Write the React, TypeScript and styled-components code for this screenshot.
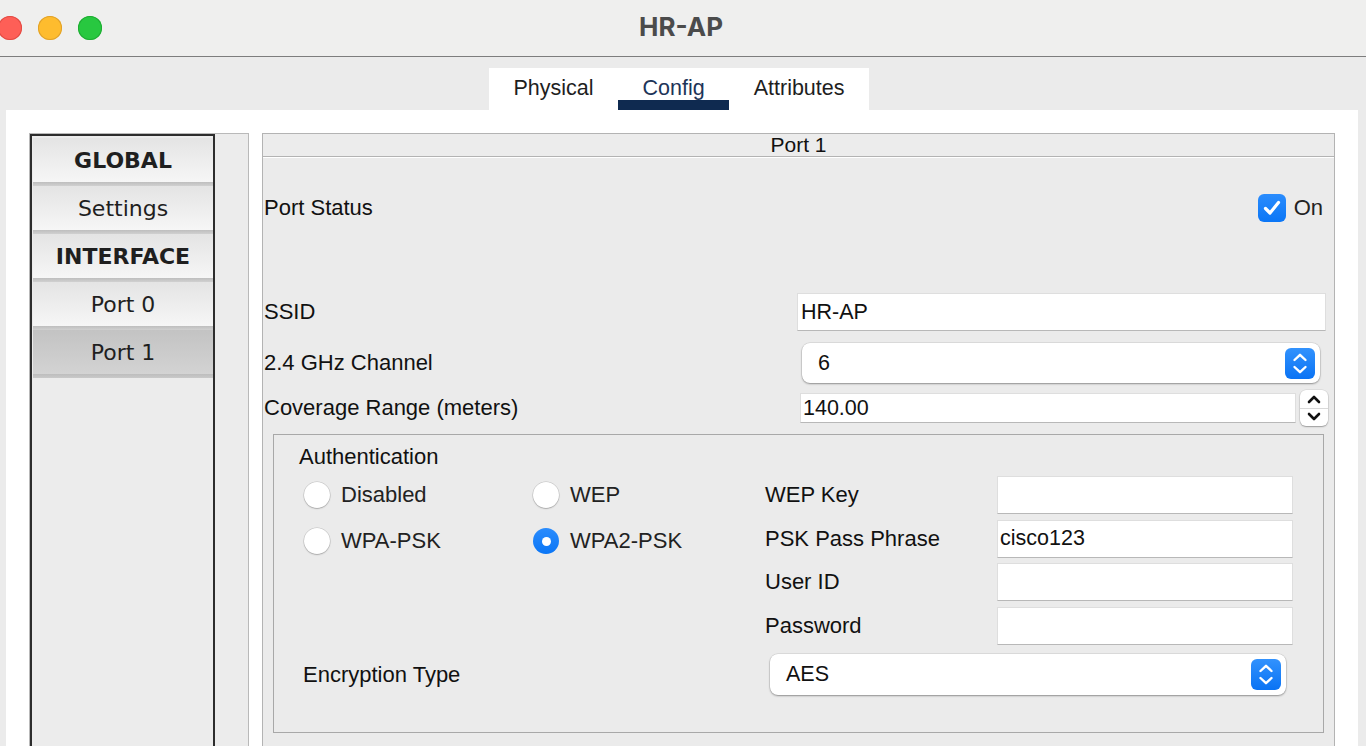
import React from "react";
import styled, { createGlobalStyle } from "styled-components";

const GlobalStyle = createGlobalStyle`
  html, body {
    margin: 0;
    padding: 0;
    background: #ebebeb;
  }
  * {
    box-sizing: border-box;
  }
`;

const Root = styled.div`
  width: 1366px;
  height: 746px;
  overflow: hidden;
  display: flex;
  flex-direction: column;
  background: #ebebeb;
  font-family: "Liberation Sans", Arial, sans-serif;
  color: #111;
`;

const TitleBar = styled.div`
  height: 57px;
  flex-shrink: 0;
  display: grid;
  grid-template-columns: 1fr auto 1fr;
  align-items: center;
  background: #efefee;
  border-bottom: 1px solid #7d7d7d;
`;

const Lights = styled.div`
  display: flex;
  gap: 16px;
  margin-left: -2px;
  margin-top: -1px;
`;

const Light = styled.span<{ $color: string; $edge: string }>`
  width: 24px;
  height: 24px;
  border-radius: 50%;
  background: ${(p) => p.$color};
  box-shadow: inset 0 0 0 1px ${(p) => p.$edge};
`;

const Title = styled.div`
  font-family: Inter, "Liberation Sans", sans-serif;
  font-weight: 700;
  font-size: 26px;
  color: #4b4b4b;
  margin-top: -3px;
  margin-left: -4px;
`;

const Body = styled.div`
  flex: 1;
  min-height: 0;
  display: flex;
  flex-direction: column;
`;

const TabBar = styled.div`
  align-self: center;
  margin: 11px 8px 0 0;
  display: flex;
  background: #fff;
`;

const Tab = styled.div<{ $active?: boolean }>`
  position: relative;
  height: 42px;
  padding: 8px 24.5px 0;
  line-height: 24px;
  font-size: 21.5px;
  color: ${(p) => (p.$active ? "#1d3458" : "#1e1e1e")};
  &::after {
    content: "";
    display: ${(p) => (p.$active ? "block" : "none")};
    position: absolute;
    left: 0;
    right: 0;
    bottom: 0;
    height: 10px;
    background: #0f2a50;
  }
`;

const Content = styled.div`
  flex: 1;
  min-height: 0;
  margin: 0 8px 0 6px;
  padding: 23px 23px 0;
  background: #fff;
  display: flex;
  gap: 13px;
  overflow: hidden;
`;

const Sidebar = styled.div`
  width: 220px;
  flex-shrink: 0;
  background: #ececec;
  border: 1px solid #b9b9b9;
  border-bottom: none;
`;

const NavList = styled.div`
  width: 185px;
  height: 100%;
  border: 2px solid #2d2d2d;
  border-bottom: none;
  padding: 2px 0 0 1px;
  background: #ececec;
`;

const NavItem = styled.div<{ $bold?: boolean; $selected?: boolean }>`
  height: 48px;
  line-height: 45px;
  text-align: center;
  font-family: "DejaVu Sans", Verdana, sans-serif;
  font-size: 22px;
  font-weight: ${(p) => (p.$bold ? 700 : 400)};
  color: #1f1f1f;
  background: ${(p) =>
    p.$selected
      ? "linear-gradient(#c3c3c3, #d3d3d3 44px, #bdbdbd 44px, #c9c9c9)"
      : "linear-gradient(#e4e4e4, #f6f6f6 44px, #bebebe 44px, #d0d0d0)"};
`;

const Panel = styled.div`
  flex: 1;
  display: flex;
  flex-direction: column;
  background: #ebebeb;
  border: 1px solid #b3b3b3;
  border-bottom: none;
`;

const PanelHeader = styled.div`
  height: 23px;
  line-height: 21px;
  text-align: center;
  font-size: 21px;
  color: #111;
  background: #ececec;
  border-bottom: 1px solid #b3b3b3;
  box-shadow: 0 1px 0 #fff;
`;

const PanelBody = styled.div`
  display: flex;
  flex-direction: column;
  padding-left: 1px;
`;

const Row = styled.div<{ $h: number; $mt: number; $pr: number }>`
  display: flex;
  align-items: center;
  height: ${(p) => p.$h}px;
  margin-top: ${(p) => p.$mt}px;
  padding-right: ${(p) => p.$pr}px;
`;

const Label = styled.span`
  flex: 1;
  font-size: 22px;
  color: #111;
  white-space: nowrap;
`;

const CheckBox = styled.span`
  width: 28px;
  height: 28px;
  border-radius: 6px;
  background: linear-gradient(#2a8cfd, #0b76f6);
  display: flex;
  align-items: center;
  justify-content: center;
`;

const CheckText = styled.span`
  margin-left: 8px;
  font-size: 22px;
  color: #222;
`;

const TextField = styled.div<{ $w: number; $h: number; $pl?: number }>`
  width: ${(p) => p.$w}px;
  height: ${(p) => p.$h}px;
  background: #fff;
  border: 1px solid #dedede;
  border-bottom-color: #b8b8b8;
  padding-left: ${(p) => p.$pl ?? 2}px;
  display: flex;
  align-items: center;
  font-size: 21.5px;
  color: #111;
`;

const Select = styled.div<{ $w: number; $h: number; $mr?: number }>`
  width: ${(p) => p.$w}px;
  height: ${(p) => p.$h}px;
  margin-right: ${(p) => p.$mr ?? 0}px;
  background: #fff;
  border-radius: 8px;
  box-shadow: 0 0 0 0.5px rgba(0, 0, 0, 0.12), 0 1px 2px rgba(0, 0, 0, 0.35);
  display: flex;
  align-items: center;
  justify-content: space-between;
  padding: 0 5px 0 16px;
  font-size: 21.5px;
  color: #111;
`;

const Stepper = styled.span`
  width: 30px;
  height: 31px;
  border-radius: 6px;
  background: linear-gradient(#3292fd, #0a73f4);
  display: flex;
  align-items: center;
  justify-content: center;
`;

const Spinner = styled.div`
  width: 28px;
  height: 36px;
  margin-left: 4px;
  background: #fff;
  border-radius: 6px;
  box-shadow: 0 0 0 0.5px rgba(0, 0, 0, 0.1), 0 1px 1.5px rgba(0, 0, 0, 0.3);
  display: flex;
  flex-direction: column;
`;

const SpinHalf = styled.span<{ $top?: boolean }>`
  flex: 1;
  display: flex;
  align-items: center;
  justify-content: center;
  border-bottom: ${(p) => (p.$top ? "1px solid #d9d9d9" : "none")};
`;

const Group = styled.div`
  margin: 8px 10px 0 9px;
  border: 1px solid #a8a8a8;
  padding: 10px 0 37px;
`;

const Legend = styled.div`
  margin-left: 25px;
  line-height: 24px;
  font-size: 22px;
  color: #111;
`;

const AuthBody = styled.div`
  display: flex;
  margin-top: 7px;
`;

const RadioGrid = styled.div`
  width: 491px;
  padding-left: 30px;
  display: grid;
  grid-template-columns: 229px 1fr;
  grid-auto-rows: 38px;
  row-gap: 8px;
  align-content: start;
`;

const RadioItem = styled.label`
  display: flex;
  align-items: center;
  gap: 11px;
  font-size: 22px;
  color: #222;
`;

const RadioDot = styled.span<{ $checked?: boolean }>`
  width: 26px;
  height: 26px;
  border-radius: 50%;
  display: flex;
  align-items: center;
  justify-content: center;
  background: ${(p) => (p.$checked ? "linear-gradient(#2a8cfd, #0b76f6)" : "#fff")};
  box-shadow: ${(p) =>
    p.$checked
      ? "none"
      : "0 0 0 0.5px rgba(0,0,0,0.18), 0 1px 1.5px rgba(0,0,0,0.2)"};
  &::after {
    content: "";
    display: ${(p) => (p.$checked ? "block" : "none")};
    width: 9px;
    height: 9px;
    border-radius: 50%;
    background: #fff;
  }
`;

const FieldGrid = styled.div`
  display: grid;
  grid-template-columns: 232px 296px;
  grid-auto-rows: 38px;
  row-gap: 5.5px;
  align-items: center;
`;

const EncRow = styled.div`
  display: flex;
  align-items: center;
  height: 41px;
  margin-top: 9.5px;
  padding-left: 29px;
`;

const StepperIcon = () => (
  <svg width="30" height="31" viewBox="0 0 30 31">
    <path
      d="M9.5 12 L15 6.8 L20.5 12 M9.5 19 L15 24.2 L20.5 19"
      fill="none"
      stroke="#fff"
      strokeWidth="2.4"
      strokeLinecap="round"
      strokeLinejoin="round"
    />
  </svg>
);

const Chevron = ({ up }: { up?: boolean }) => (
  <svg width="16" height="10" viewBox="0 0 16 10">
    <path
      d={up ? "M3 8 L8 3 L13 8" : "M3 2 L8 7 L13 2"}
      fill="none"
      stroke="#111"
      strokeWidth="2.6"
      strokeLinecap="round"
      strokeLinejoin="round"
    />
  </svg>
);

const navItems = [
  { label: "GLOBAL", bold: true },
  { label: "Settings" },
  { label: "INTERFACE", bold: true },
  { label: "Port 0" },
  { label: "Port 1", selected: true },
];

const radios = [
  { label: "Disabled" },
  { label: "WEP" },
  { label: "WPA-PSK" },
  { label: "WPA2-PSK", checked: true },
];

const fields = [
  { label: "WEP Key", value: "" },
  { label: "PSK Pass Phrase", value: "cisco123" },
  { label: "User ID", value: "" },
  { label: "Password", value: "" },
];

export default function App() {
  return (
    <Root>
      <GlobalStyle />
      <TitleBar>
        <Lights>
          <Light $color="#fe5f57" $edge="#e24b43" />
          <Light $color="#febc2e" $edge="#e0a12a" />
          <Light $color="#28c840" $edge="#1eac32" />
        </Lights>
        <Title>HR-AP</Title>
        <div />
      </TitleBar>
      <Body>
        <TabBar>
          <Tab>Physical</Tab>
          <Tab $active>Config</Tab>
          <Tab>Attributes</Tab>
        </TabBar>
        <Content>
          <Sidebar>
            <NavList>
              {navItems.map((item) => (
                <NavItem key={item.label} $bold={item.bold} $selected={item.selected}>
                  {item.label}
                </NavItem>
              ))}
            </NavList>
          </Sidebar>
          <Panel>
            <PanelHeader>Port 1</PanelHeader>
            <PanelBody>
              <Row $h={28} $mt={37} $pr={11}>
                <Label>Port Status</Label>
                <CheckBox>
                  <svg width="22" height="22" viewBox="0 0 22 22">
                    <path
                      d="M4.5 11.5 L9 16 L17.5 5.5"
                      fill="none"
                      stroke="#fff"
                      strokeWidth="3.2"
                      strokeLinecap="round"
                      strokeLinejoin="round"
                    />
                  </svg>
                </CheckBox>
                <CheckText>On</CheckText>
              </Row>
              <Row $h={38} $mt={71} $pr={8}>
                <Label>SSID</Label>
                <TextField $w={529} $h={38} $pl={3}>
                  HR-AP
                </TextField>
              </Row>
              <Row $h={40} $mt={12} $pr={14}>
                <Label>2.4 GHz Channel</Label>
                <Select $w={518} $h={40}>
                  6
                  <Stepper>
                    <StepperIcon />
                  </Stepper>
                </Select>
              </Row>
              <Row $h={36} $mt={7} $pr={6}>
                <Label>Coverage Range (meters)</Label>
                <TextField $w={496} $h={30}>
                  140.00
                </TextField>
                <Spinner>
                  <SpinHalf $top>
                    <Chevron up />
                  </SpinHalf>
                  <SpinHalf>
                    <Chevron />
                  </SpinHalf>
                </Spinner>
              </Row>
              <Group>
                <Legend>Authentication</Legend>
                <AuthBody>
                  <RadioGrid>
                    {radios.map((r) => (
                      <RadioItem key={r.label}>
                        <RadioDot $checked={r.checked} />
                        {r.label}
                      </RadioItem>
                    ))}
                  </RadioGrid>
                  <FieldGrid>
                    {fields.map((f) => (
                      <React.Fragment key={f.label}>
                        <Label>{f.label}</Label>
                        <TextField $w={296} $h={38}>
                          {f.value}
                        </TextField>
                      </React.Fragment>
                    ))}
                  </FieldGrid>
                </AuthBody>
                <EncRow>
                  <Label>Encryption Type</Label>
                  <Select $w={516} $h={41} $mr={37}>
                    AES
                    <Stepper>
                      <StepperIcon />
                    </Stepper>
                  </Select>
                </EncRow>
              </Group>
            </PanelBody>
          </Panel>
        </Content>
      </Body>
    </Root>
  );
}
